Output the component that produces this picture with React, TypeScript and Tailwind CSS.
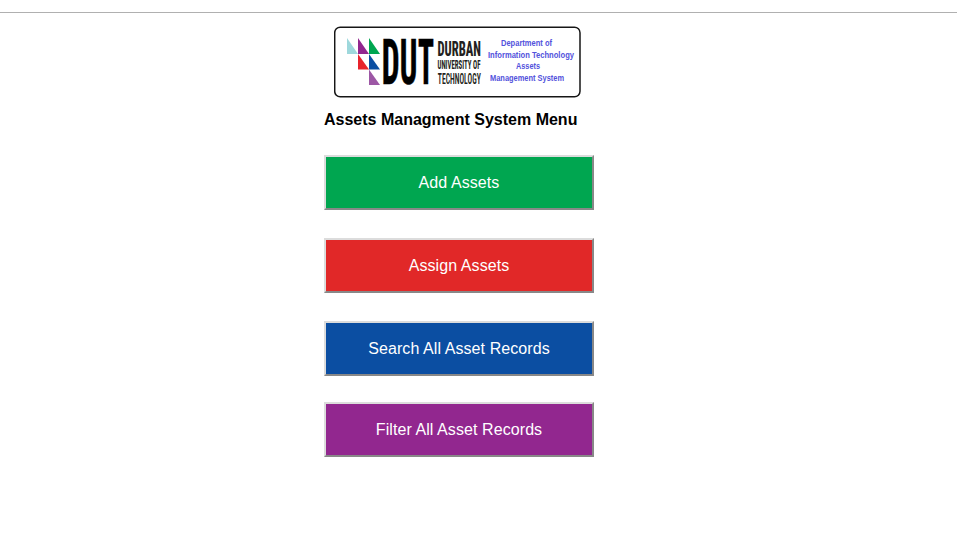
const buttons = [
  { label: "Add Assets", style: "bg-[#00a650]" },
  { label: "Assign Assets", style: "bg-[#e12828] mt-7" },
  { label: "Search All Asset Records", style: "bg-[#0b4ea2] mt-7" },
  { label: "Filter All Asset Records", style: "bg-[#92278f] mt-[26px]" },
];

function Logo() {
  return (
    <svg className="ml-[10px] block" width="247" height="72" viewBox="334 26 247 72">
      <rect x="334.7" y="27.2" width="245.3" height="69.6" rx="5.5" fill="#fff" stroke="#161616" strokeWidth="1.5" />
      <path d="M347 38v16h11z" fill="#9ed8dc" />
      <path d="M358 38v16h11z" fill="#92278f" />
      <path d="M369 38v16h11z" fill="#00a650" />
      <path d="M358 54v15.500h11z" fill="#e8232b" />
      <path d="M369 54v15.500h11z" fill="#0b4ea2" />
      <path d="M369 69.500v15.500h11z" fill="#9d57a5" />
      <g fontFamily="'Roboto','Liberation Sans',sans-serif" style={{ fontStretch: "75%" }}>
        <g fontSize="63" fontWeight="700" fill="#000" stroke="#000" strokeWidth="0.7">
          <text x="381.800" y="83.500" textLength="17.800" lengthAdjust="spacingAndGlyphs">D</text>
          <text x="399.700" y="83.500" textLength="17.600" lengthAdjust="spacingAndGlyphs">U</text>
          <text x="417.900" y="83.500" textLength="15.900" lengthAdjust="spacingAndGlyphs">T</text>
        </g>
        <g fill="#231f20">
          <text x="437.500" y="56" fontSize="20.500" fontWeight="800" textLength="43.500" lengthAdjust="spacingAndGlyphs">DURBAN</text>
          <text x="437.500" y="69" fontSize="12.500" fontWeight="700" textLength="43" lengthAdjust="spacingAndGlyphs">UNIVERSITY OF</text>
          <text x="437.800" y="84" fontSize="15.500" fontWeight="600" textLength="43" lengthAdjust="spacingAndGlyphs">TECHNOLOGY</text>
        </g>
      </g>
      <g fontFamily="'Liberation Sans',sans-serif" fontWeight="700" fontSize="9.2" fill="#5252dc">
        <text x="501" y="46" textLength="51" lengthAdjust="spacingAndGlyphs">Department of</text>
        <text x="488" y="57.500" textLength="86" lengthAdjust="spacingAndGlyphs">Information Technology</text>
        <text x="516" y="69" textLength="24" lengthAdjust="spacingAndGlyphs">Assets</text>
        <text x="490" y="80.500" textLength="74" lengthAdjust="spacingAndGlyphs">Management System</text>
      </g>
    </svg>
  );
}

export default function App() {
  return (
    <div className="h-[537px] w-full overflow-hidden bg-white pt-3 font-['Liberation_Sans',Arial,sans-serif] text-base">
      <div className="h-px bg-[#b0b0b0]" />
      <main className="ml-[324px] mt-[13px] flex w-[270px] flex-col">
        <Logo />
        <h1 className="mt-[13px] h-[18px] whitespace-nowrap font-bold leading-[18px] text-black">Assets Managment System Menu</h1>
        <nav className="mt-[26px] flex flex-col">
          {buttons.map((b) => (
            <button
              key={b.label}
              className={`h-[55px] w-full border-2 border-t-[#dcdcdc] border-l-[#dcdcdc] border-r-[#888888] border-b-[#888888] tracking-[0.08px] text-white ${b.style}`}
            >
              {b.label}
            </button>
          ))}
        </nav>
      </main>
    </div>
  );
}
